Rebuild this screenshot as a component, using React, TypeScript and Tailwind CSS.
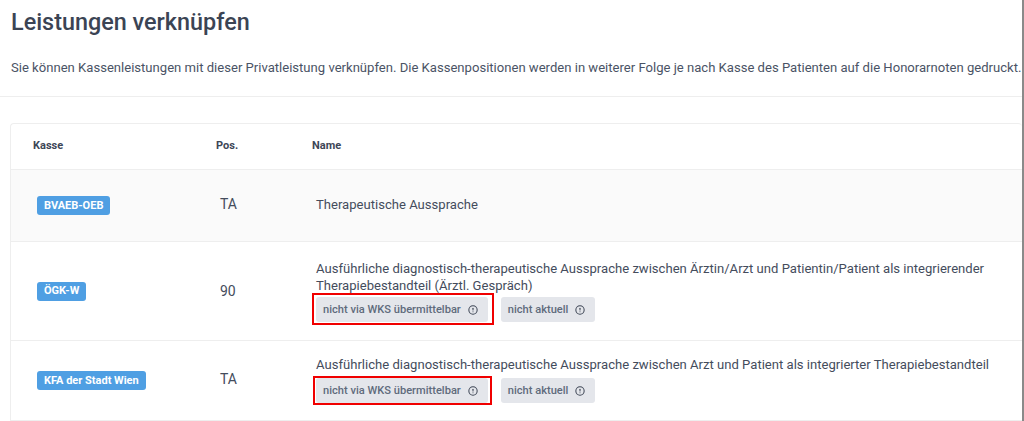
import { Info } from 'lucide-react'

type Row = {
  kasse: string
  pos: string
  name: string
  chips?: boolean
  shaded?: boolean
  rowClass: string
  posClass: string
  nameClass: string
  chipGap?: string
  markClass?: string
}

const rows: Row[] = [
  {
    kasse: 'BVAEB-OEB',
    pos: 'TA',
    name: 'Therapeutische Aussprache',
    shaded: true,
    rowClass: 'h-[72px]',
    posClass: 'pb-[2px]',
    nameClass: 'pb-[2px]',
  },
  {
    kasse: 'ÖGK-W',
    pos: '90',
    name: 'Ausführliche diagnostisch-therapeutische Aussprache zwischen Ärztin/Arzt und Patientin/Patient als integrierender Therapiebestandteil (Ärztl. Gespräch)',
    chips: true,
    rowClass: 'h-[99px]',
    posClass: '',
    nameClass: '',
    chipGap: 'mt-[3px]',
    markClass: '-left-[4px] -right-[6px] -top-[4px] -bottom-[3px]',
  },
  {
    kasse: 'KFA der Stadt Wien',
    pos: 'TA',
    name: 'Ausführliche diagnostisch-therapeutische Aussprache zwischen Arzt und Patient als integrierter Therapiebestandteil',
    chips: true,
    rowClass: 'h-[80px]',
    posClass: 'pb-[2px]',
    nameClass: 'pb-[2px]',
    chipGap: 'mt-[5px]',
    markClass: '-left-[3px] -right-[4px] -top-[2px] -bottom-[2px]',
  },
]

function Chip({ label, markClass }: { label: string; markClass?: string }) {
  return (
    <span className="relative flex h-[25px] items-center gap-[7px] rounded-[3px] bg-[#e4e6eb] pl-[7px] pr-[10px] text-[11.1px] font-medium text-[#5f6b7c]">
      {label}
      <Info size={10} strokeWidth={2.5} className="rotate-180 text-[#3f4756]" />
      {markClass && <span className={`absolute border-2 border-[#f00000] ${markClass}`} />}
    </span>
  )
}

export default function App() {
  return (
    <main className="h-[421px] w-[1024px] overflow-hidden border-r-2 border-[#8a8a8a] bg-white font-['Roboto',sans-serif] text-[#3d4657]">
      <h1 className="h-[44px] pl-[11px] pt-[6px] text-[23.4px] font-medium leading-[32px] text-[#3b4454]">
        Leistungen verknüpfen
      </h1>
      <p className="h-[53px] whitespace-nowrap border-b border-[#eeeeee] pl-[11px] pt-[14px] text-[13.08px] leading-[20px] text-[#4a5365]">
        Sie können Kassenleistungen mit dieser Privatleistung verknüpfen. Die Kassenpositionen werden in weiterer Folge je nach Kasse des Patienten auf die Honorarnoten gedruckt.
      </p>

      <section className="ml-[10px] mt-[26px] rounded-t-[4px] border-l border-t border-[#eeeeee]">
        <div className="grid h-[46px] grid-cols-[183px_96px_1fr] items-center border-b border-[#eeeeee] pl-[22px] text-[11px] font-bold text-[#3d4657]">
          <span>Kasse</span>
          <span>Pos.</span>
          <span>Name</span>
        </div>
        {rows.map(r => (
          <div
            key={r.kasse}
            className={`grid grid-cols-[183px_96px_1fr] items-center border-b border-[#eeeeee] pl-[26px] ${r.rowClass} ${r.shaded ? 'bg-[#fafafa]' : ''}`}
          >
            <div className="pb-[4px]">
              <span className="inline-flex h-[19px] items-center rounded-[3px] bg-[#4f9fe3] px-[7px] text-[11px] font-bold text-white">
                {r.kasse}
              </span>
            </div>
            <div className={`text-[14px] text-[#444c5c] ${r.posClass}`}>{r.pos}</div>
            <div className={`pr-[8px] text-[13.08px] leading-[17px] text-[#444c5c] ${r.nameClass}`}>
              <div>{r.name}</div>
              {r.chips && (
                <div className={`flex gap-[13px] ${r.chipGap}`}>
                  <Chip label="nicht via WKS übermittelbar" markClass={r.markClass} />
                  <Chip label="nicht aktuell" />
                </div>
              )}
            </div>
          </div>
        ))}
      </section>
    </main>
  )
}
